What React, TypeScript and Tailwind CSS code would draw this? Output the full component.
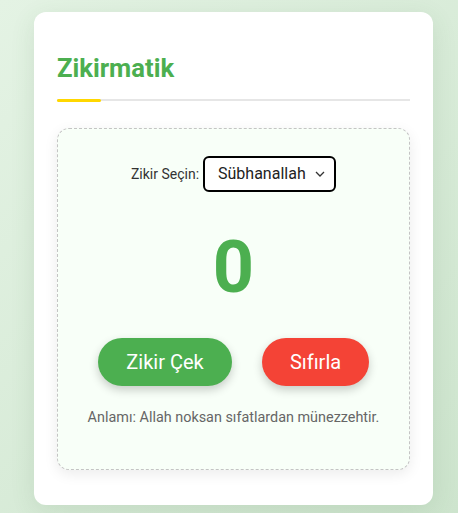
import { useState } from 'react'

const zikirler = [
  { name: 'Sübhanallah', meaning: 'Allah noksan sıfatlardan münezzehtir.' },
  { name: 'Elhamdülillah', meaning: 'Hamd Allah’a mahsustur.' },
  { name: 'Allahu Ekber', meaning: 'Allah en büyüktür.' },
]

export default function App() {
  const [index, setIndex] = useState(0)
  const [count, setCount] = useState(0)
  const current = zikirler[index]

  return (
    <div
      className="min-h-[513px] w-full bg-[linear-gradient(135deg,#e4f3e4,#cde4cd)] pt-[12px] px-[34px] pb-[8px] font-['Roboto',sans-serif]"
    >
      <div className="w-[399px] rounded-[12px] bg-white px-[23px] pt-[41px] pb-[35px] shadow-[0_6px_24px_rgba(60,110,60,0.12)]">
        {/* Header */}
        <div className="relative border-b-2 border-[#e6e6e6] pb-[16px]">
          <h1 className="text-[25.6px] font-bold leading-[30px] text-[#4caf50]">Zikirmatik</h1>
          <span className="absolute left-0 bottom-[-3px] h-[3px] w-[44px] rounded-full bg-[#ffd700]" />
        </div>

        {/* Counter box */}
        <div className="mt-[27px] flex h-[342px] flex-col items-center rounded-[12px] border border-dashed border-[#c4c4c4] bg-[#f8fff8] pt-[27px] shadow-[0_4px_14px_rgba(0,0,0,0.08)]">
          <div className="flex items-center gap-[4px]">
            <label className="text-[14px] text-[#333]">Zikir Seçin:</label>
            <div className="relative">
              <select
                value={index}
                onChange={(e) => {
                  setIndex(Number(e.target.value))
                  setCount(0)
                }}
                className="h-[36px] w-[133px] appearance-none rounded-[6px] border-2 border-black bg-white pl-[13px] pr-[28px] text-[16px] text-[#222] outline-none"
              >
                {zikirler.map((z, i) => (
                  <option key={z.name} value={i}>
                    {z.name}
                  </option>
                ))}
              </select>
              <svg
                className="pointer-events-none absolute right-[11px] top-[15px]"
                width="10"
                height="6"
                viewBox="0 0 10 6"
                fill="none"
              >
                <path d="M1 1l4 4 4-4" stroke="#333" strokeWidth="1.3" />
              </svg>
            </div>
          </div>

          <div className="mt-[34px] text-[72px] font-bold leading-[84px] text-[#4caf50]">{count}</div>

          <div className="mt-[28px] flex gap-[30px]">
            <button
              onClick={() => setCount(count + 1)}
              className="h-[48px] w-[134px] rounded-full bg-[#4caf50] text-[20px] text-white shadow-[0_4px_10px_rgba(0,0,0,0.2)]"
            >
              Zikir Çek
            </button>
            <button
              onClick={() => setCount(0)}
              className="h-[48px] w-[107px] rounded-full bg-[#f44336] text-[20px] text-white shadow-[0_4px_10px_rgba(0,0,0,0.2)]"
            >
              Sıfırla
            </button>
          </div>

          <p className="mt-[21px] text-[14.4px] text-[#666]">Anlamı: {current.meaning}</p>
        </div>
      </div>
    </div>
  )
}
